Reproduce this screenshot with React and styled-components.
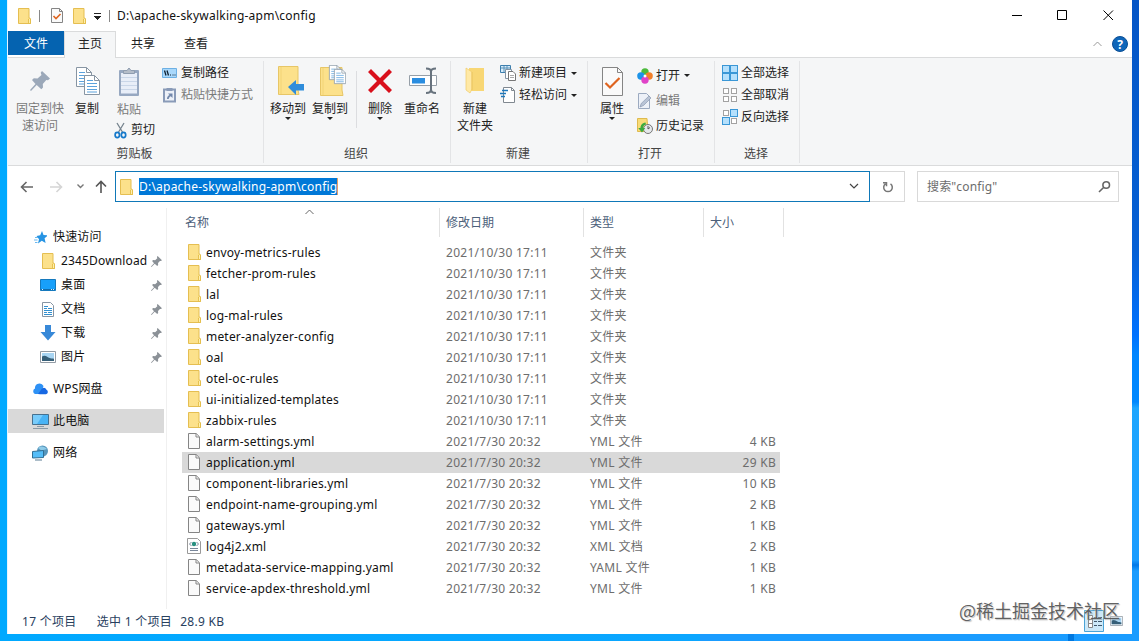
import React, { useState } from 'react'
import styled, { createGlobalStyle } from 'styled-components'

const GlobalStyle = createGlobalStyle`
    * {
        box-sizing: border-box;
    }

    body {
        margin: 0;
        overflow: hidden;
        font-family: "Noto Sans", "Noto Sans CJK SC", sans-serif;
        font-size: 12px;
        line-height: 18px;
        color: #111;
    }

    svg {
        display: block;
        flex: none;
    }
`

const Desktop = styled.div`
    width: 1139px;
    height: 641px;
    padding: 0 7px 7px 7px;
    background:
        linear-gradient(#0078e0, #0078e0) 1068px 634px / 6px 7px no-repeat,
        linear-gradient(#1a9cff, #1a9cff) 700px 634px / 439px 7px no-repeat,
        linear-gradient(#0455c6 0, #0560d4 250px, #0072ff 335px, #0086ff 355px, #0088ff 402px, #1ea6ff 408px, #1a9cff 560px, #0078e8 565px, #1a9cff 571px) 1132px 0 / 7px 641px no-repeat,
        linear-gradient(90deg, #00a9ff, #12a4ff);
`

const Window = styled.div`
    height: 634px;
    display: flex;
    flex-direction: column;
    background: #fff;
    border-left: 1px solid #e6f5ff;
`

const TitleBar = styled.div`
    height: 31px;
    display: flex;
    align-items: center;
    padding-left: 10px;
`

const TitleDivider = styled.div`
    width: 1px;
    height: 12px;
    background: #888;
    margin: 0 ${p => p.$right}px 0 ${p => p.$left}px;
`

const TitleText = styled.div`
    flex: 1;
    letter-spacing: 0.23px;
`

const WindowButtons = styled.div`
    display: flex;
    gap: 35px;
    padding-right: 18px;
`

const Tabs = styled.div`
    height: 27px;
    display: flex;
    border-bottom: 1px solid #dadbdc;
    flex: none;
`

const Tab = styled.div`
    width: ${p => p.$width}px;
    height: ${p => (p.$active ? 27 : 24)}px;
    padding-top: ${p => (p.$active ? 3 : 4)}px;
    text-align: center;
    color: ${p => (p.$file ? '#fff' : '#222')};
    background: ${p => (p.$file ? '#0563b0' : p.$active ? '#f5f6f7' : 'transparent')};
    border: ${p => (p.$active ? '1px solid #dadbdc' : 'none')};
    border-bottom: none;
`

const TabTools = styled.div`
    margin-left: auto;
    display: flex;
    align-items: center;
    gap: 10px;
    padding-right: 4px;
`

const RibbonBar = styled.div`
    height: 108px;
    display: flex;
    flex: none;
    background: #f5f6f7;
    border-bottom: 1px solid #dadbdc;
    padding-top: 3px;
`

const Group = styled.div`
    width: ${p => p.$width}px;
    height: 102px;
    display: flex;
    flex-direction: column;
    border-right: 1px solid #e3e4e6;
`

const GroupBody = styled.div`
    flex: 1;
    display: flex;
    align-items: flex-start;
    padding-left: ${p => p.$left}px;
`

const GroupLabel = styled.div`
    height: 18px;
    padding-right: 2px;
    text-align: center;
    color: #444;
`

const Column = styled.div`
    width: ${p => p.$width || 'auto'};
    padding: ${p => p.$top || 1}px 0 0 ${p => p.$left || 0}px;
`

const BigButton = styled.div`
    width: ${p => p.$width}px;
    display: flex;
    flex-direction: column;
    align-items: center;
    text-align: center;
    line-height: 17px;
    white-space: pre;
    color: ${p => (p.$disabled ? '#7a7a7a' : '#222')};
`

const BigIcon = styled.div`
    height: 39px;
    padding-top: 1px;
    display: flex;
    align-items: center;
`

const SmallButton = styled.div`
    height: ${p => p.$height || 22}px;
    display: flex;
    align-items: center;
    gap: ${p => p.$gap || 3}px;
    white-space: nowrap;
    color: ${p => (p.$disabled ? '#7a7a7a' : '#222')};
`

const Arrow = styled.span`
    width: 0;
    border: 3px solid transparent;
    border-top-color: #222;
    border-bottom: none;
    margin-left: ${p => p.$left || 0}px;
`

const BodyDivider = styled.div`
    width: 1px;
    height: 57px;
    background: #dcdde0;
    margin: 10px 4px 0 5px;
`

const AddressRow = styled.div`
    height: 42px;
    flex: none;
    display: flex;
    align-items: flex-start;
    padding: 5px 13px 0 12px;
`

const NavButtons = styled.div`
    width: 95px;
    height: 31px;
    display: flex;
    align-items: center;
`

const AddressBox = styled.div`
    width: 755px;
    height: 31px;
    display: flex;
    align-items: center;
    padding: 0 10px 0 4px;
    border: 1px solid #0f78b8;
`

const Selected = styled.span`
    background: #0078d7;
    color: #fff;
    height: 17px;
    line-height: 17px;
    margin-left: 6px;
    margin-right: auto;
    border-right: 1px solid #e8a060;
    letter-spacing: 0.22px;
`

const Refresh = styled.div`
    width: 35px;
    height: 31px;
    display: flex;
    align-items: center;
    justify-content: center;
    padding-left: 2px;
    border: 1px solid #d9d9d9;
    border-left: none;
`

const Search = styled.div`
    width: 202px;
    height: 31px;
    margin-left: 12px;
    display: flex;
    align-items: center;
    justify-content: space-between;
    padding: 0 7px 0 9px;
    border: 1px solid #d9d9d9;
    color: #6d6d6d;
    letter-spacing: 0.15px;
`

const Main = styled.div`
    flex: 1;
    display: flex;
    min-height: 0;
`

const Sidebar = styled.div`
    width: 159px;
    padding-top: 17px;
    border-right: 1px solid #f0f0f0;
`

const NavItem = styled.div`
    width: 156px;
    height: 24px;
    display: flex;
    align-items: center;
    padding: 0 2px 0 ${p => (p.$child ? 32 : 24)}px;
    margin-top: ${p => (p.$spaced ? 8 : 0)}px;
    background: ${p => (p.$active ? '#d9d9d9' : 'transparent')};
`

const NavText = styled.span`
    flex: 1;
    margin-left: 5px;
    white-space: nowrap;
    letter-spacing: 0.15px;
`

const Files = styled.div`
    padding-left: 15px;
`

const columns = '258px 144px 120px 80px'

const Header = styled.div`
    height: 34px;
    display: grid;
    grid-template-columns: ${columns};
    color: #4c607a;
`

const HeaderCell = styled.div`
    position: relative;
    height: 29px;
    padding: 6px 0 0 ${p => p.$left || 6}px;
    border-right: 1px solid #e2e2e2;
`

const SortMark = styled.div`
    position: absolute;
    top: 1px;
    left: 123px;
`

const Row = styled.div`
    width: 598px;
    height: 21px;
    display: grid;
    grid-template-columns: 264px 144px 114px 72px;
    align-items: center;
    background: ${p => (p.$selected ? '#d9d9d9' : 'transparent')};
    color: #6d6d6d;
    letter-spacing: 0.27px;
`

const NameCell = styled.div`
    display: flex;
    align-items: center;
    gap: 5px;
    padding-left: 5px;
    color: #111;
    white-space: nowrap;
    letter-spacing: 0.19px;
`

const Size = styled.div`
    text-align: right;
`

const StatusBar = styled.div`
    height: 25px;
    flex: none;
    display: flex;
    position: relative;
    padding: 4px 0 0 14px;
    color: #28405e;
`

const StatusItem = styled.span`
    margin-right: ${p => p.$right}px;
    white-space: pre;
    letter-spacing: 0.3px;
`

const ViewButtons = styled.div`
    display: flex;
    align-items: center;
    gap: 6px;
    margin-left: auto;
    height: 22px;
    margin-right: 9px;
    margin-top: -3px;
`

const Watermark = styled.div`
    position: absolute;
    right: 12px;
    top: -12px;
    font-family: "Noto Sans CJK SC", sans-serif;
    font-size: 18px;
    line-height: 26px;
    color: rgba(70,70,70,0.85);
    text-shadow: 0 0 2px #fff, 1px 1px 1px rgba(0,0,0,0.3);
    white-space: nowrap;
`

function Folder({ w = 13, h = 16 }) {
    return (
        <svg width={w} height={h} viewBox="0 0 13 16" preserveAspectRatio="none">
            <path d="M.5.5H11V10l1.5 1v4.5H.5z" fill="#fce18b" stroke="#e5be51" />
            <path d="M10.5 15.5V11l1.2-1 .8 1v4.5z" fill="#fff0ae" stroke="#dfb73f" strokeWidth=".8" />
        </svg>
    )
}

function Page() {
    return (
        <svg width="12" height="16">
            <path d="M.5.5h7.7l3.3 3.3v11.7H.5z" fill="#fafafa" stroke="#858585" />
            <path d="M8 .8V4h3.400" fill="none" stroke="#858585" />
        </svg>
    )
}

function SmallCheckPage() {
    return (
        <svg width="12" height="15">
            <path d="M.5.5h8l3 3v11H.5z" fill="#fafafa" stroke="#858585" />
            <path d="M8.500.5v3h3" fill="none" stroke="#858585" />
            <path d="M2.500 8l2.500 2.500L9.500 6" fill="none" stroke="#df641f" strokeWidth="1.600" />
        </svg>
    )
}

function BigCheckPage() {
    return (
        <svg width="21" height="29">
            <path d="M.5.5h15l5 5v23H.5z" fill="#fafafa" stroke="#858585" />
            <path d="M15.500.5v5h5" fill="none" stroke="#858585" />
            <path d="M3.500 16l4.500 4.500L17.500 11" fill="none" stroke="#df641f" strokeWidth="2.200" />
        </svg>
    )
}

function XmlFile() {
    return (
        <svg width="14" height="16">
            <path d="M.5.5h10l3 3v12H.5z" fill="#fff" stroke="#999" />
            <path d="M4.5 4L2.5 6l2 2M9.5 4l2 2-2 2M3 10.5h8M3 12.5h8" fill="none" stroke="#79869a" />
            <circle cx="7" cy="6" r="2.2" fill="#289080" />
        </svg>
    )
}

function Pin({ size = 11, color = '#8b9197' }) {
    return (
        <svg width={size} height={size} viewBox="0 0 20 20">
            <path d="M12 0l8 7.500-2 1.800-1.700-.4-3.500 4 .2 3.500-1.700 1.800-4.600-4.300L1 20l-1-1 5.500-6L2 9l1.800-1.800 3.700.3 4-3.600-.8-2.100z" fill={color} />
        </svg>
    )
}

function TextPage({ x, y, s = 1 }) {
    return (
        <g transform={`translate(${x} ${y}) scale(${s})`}>
            <path d="M.5.5h10l5 5v14H.5z" fill="#fff" stroke="#8795a3" />
            <path d="M10.500.5v5h5" fill="none" stroke="#8795a3" />
            <path d="M3 5.500h6M3 8.500h10M3 11.500h10M3 14.500h10M3 17h10" stroke="#5ba2dc" fill="none" />
        </g>
    )
}

function CopyIcon() {
    return (
        <svg width="28" height="30" viewBox="-2 0 28 30">
            <TextPage x={1} y={1} />
            <TextPage x={9} y={9} />
        </svg>
    )
}

function Clipboard() {
    return (
        <svg width="22" height="30" viewBox="-1 0 22 30">
            <rect x="0" y="3" width="20" height="26" rx="1" fill="#97a8c1" />
            <path d="M2 6h16v20.500H2z" fill="#e8eef8" />
            <path d="M2 10.500h16M2 14.500h16M2 18.500h16M2 22.500h16" stroke="#c9d6e8" />
            <path d="M4.500 6.500v-3H8L10 1l2 2.500h3.500v3z" fill="#b4bdc9" stroke="#8f9db0" />
        </svg>
    )
}

function Scissors() {
    return (
        <svg width="13" height="17">
            <path d="M3 1l6 10M10 1L4 11" stroke="#76838e" strokeWidth="1.300" />
            <ellipse cx="3.300" cy="13" rx="2.200" ry="2.600" fill="none" stroke="#1679ca" strokeWidth="1.700" />
            <ellipse cx="9.500" cy="13" rx="2.200" ry="2.600" fill="none" stroke="#1679ca" strokeWidth="1.700" />
        </svg>
    )
}

function PathIcon() {
    return (
        <svg width="15" height="10">
            <path d="M.5.5h14v9H.5z" fill="#a9d8fb" stroke="#6db0e4" />
            <path d="M2.500 2.500l1.500 5M5 2.500l1.500 5" stroke="#123" strokeWidth="1.300" />
            <path d="M8 7h1M10.500 7h1M12.500 7h1" stroke="#123" />
        </svg>
    )
}

function ShortcutIcon() {
    return (
        <svg width="15" height="16" viewBox="-1 0 15 16">
            <path d="M1 2.500h11v12H1z" fill="#edf1f8" stroke="#8a9bb8" strokeWidth="2" />
            <path d="M3.500 1h6v3h-6z" fill="#8a9bb8" />
            <path d="M4 12c0-2 .5-3 2.500-4L5 6.500h4.500V11L7.800 9.300C6.500 10 5.800 11 5.800 12z" fill="#7388ab" />
        </svg>
    )
}

function MoveIcon() {
    return (
        <svg width="32" height="30" viewBox="-4 0 32 30">
            <path d="M2.500.5H22V24l1 4.500H2.500z" fill="#fce18b" stroke="#e7c667" />
            <path d="M5 1v27" stroke="#f2d477" />
            <path d="M12 21l8-7v4h8v6.500h-8V29z" fill="#2f8ddb" />
        </svg>
    )
}

function CopyToIcon() {
    return (
        <svg width="32" height="32" viewBox="-5 0 32 32">
            <path d="M1.500 2.500H23V25l1 5.500H1.500z" fill="#fce18b" stroke="#e7c667" />
            <path d="M4 3v27" stroke="#f2d477" />
            <TextPage x={10} y={0} s={0.75} />
            <TextPage x={15} y={4} s={0.75} />
        </svg>
    )
}

function DeleteIcon() {
    return (
        <svg width="26" height="26">
            <path d="M1 4l3-3 9 9 9-9 3 3-9 9 9 9-3 3-9-9-9 9-3-3 9-9z" fill="#d9101c" />
        </svg>
    )
}

function RenameIcon() {
    return (
        <svg width="30" height="28" viewBox="-2 0 30 28">
            <path d="M.5 8.500h27v10H.5z" fill="#fff" stroke="#969fa8" />
            <path d="M3 11h13v5.500H3z" fill="#2a8de0" />
            <path d="M17 1.500c3 0 5 .5 5 3v18c0 2.500-2 3.500-5 3.500M27 1.500c-3 0-5 .5-5 3v18c0 2.500 2 3.500 5 3.500" fill="none" stroke="#68737e" strokeWidth="2" />
        </svg>
    )
}

function NewFolderIcon() {
    return (
        <svg width="20" height="28">
            <path d="M4 1h15v23H4z" fill="#f8d775" />
            <path d="M1 1l6 4v17l-2 4-4-3z" fill="#ffe9a6" stroke="#efcb69" strokeWidth=".7" />
            <path d="M7 5v18" stroke="#ecc763" />
        </svg>
    )
}

function NewItemIcon() {
    return (
        <svg width="16" height="16">
            <path d="M.5.5h10v7H.5z" fill="#d6ecfb" stroke="#3d7fae" />
            <path d="M1 3h9M4 1v6M7 1v6" stroke="#5a92b8" />
            <path d="M5.500 4.500h6v9h-6z" fill="#fff" stroke="#8495a5" />
            <path d="M8.500 6.500H13l2.500 2.500v6.500h-7z" fill="#fff" stroke="#777" />
            <path d="M10 10.500h4M10 12.500h4" stroke="#aaa" />
        </svg>
    )
}

function EasyAccessIcon() {
    return (
        <svg width="16" height="16">
            <path d="M3.500.5h8l3 3v12h-11z" fill="#fff" stroke="#808890" />
            <path d="M11.500.5v3h3" fill="none" stroke="#808890" />
            <path d="M2 3.500h6M0 6.500h6M1 9.500h4" stroke="#1f79bd" strokeWidth="1.500" />
        </svg>
    )
}

function OpenIcon() {
    return (
        <svg width="16" height="16">
            <circle cx="8" cy="3.900" r="3.700" fill="#4cba3c" />
            <circle cx="12.100" cy="8" r="3.700" fill="#f2802a" />
            <circle cx="3.900" cy="8" r="3.700" fill="#1c93e8" />
            <circle cx="8" cy="12.100" r="3.700" fill="#e043c8" />
            <circle cx="8" cy="8" r="1.500" fill="#fff" />
        </svg>
    )
}

function EditIcon() {
    return (
        <svg width="15" height="16">
            <path d="M1.500.5h8l3 3v12h-11z" fill="#edf1f8" stroke="#9caac0" />
            <path d="M3 14l1.200-3.500L12 3l2 2-7.500 7.500z" fill="#b9c4d6" stroke="#8291aa" strokeWidth=".6" />
        </svg>
    )
}

function HistoryIcon() {
    return (
        <svg width="16" height="16">
            <path d="M.5.5H10l1 13H.5z" fill="#f8dc78" stroke="#dfba4e" />
            <circle cx="11" cy="11" r="4.500" fill="#e5e8eb" stroke="#777" />
            <path d="M11 8v3l2-1.500" fill="none" stroke="#555" />
            <path d="M8.500 4.500C5 5 3.500 7.500 3.500 10H1.200L5 14.500 8.200 10H6.200c0-2 .8-3 2.800-3.500z" fill="#3bab3f" />
        </svg>
    )
}

// filled: which of the four squares are highlighted
function SelectIcon({ filled }) {
    const cells = [[0, 0], [8, 0], [0, 8], [8, 8]]
    return (
        <svg width="16" height="16">
            {cells.map(([x, y], i) =>
                filled.includes(i)
                    ? <rect key={i} x={x + 0.5} y={y + 0.5} width="7" height="7" fill="#b5e0fc" stroke="#3a97d6" />
                    : <rect key={i} x={x + 1.5} y={y + 1.5} width="5" height="5" fill="#fff" stroke="#a2a2a2" />
            )}
        </svg>
    )
}

function Star() {
    return (
        <svg width="14" height="13" viewBox="-1 0 14 13">
            <path d="M8 0l1.500 4 4.500.3-3.400 3 1 4.700-3.800-2.300L4 12.500l1-4.300L2.500 5l3.700-.8z" fill="#2794e3" />
            <path d="M1 6.500h3M0 9h3.500M1 11.500h2.500" stroke="#6bb8ef" />
        </svg>
    )
}

function DesktopIcon() {
    return (
        <svg width="16" height="12">
            <path d="M.5.5h15v11H.5z" fill="#18a0fa" stroke="#1579bd" />
            <path d="M1 10.500h14" stroke="#126dac" />
            <path d="M2 10.500h1M11 10.500h1M13 10.500h1" stroke="#d7f0ff" />
        </svg>
    )
}

function DocIcon() {
    return (
        <svg width="12" height="15">
            <path d="M.5.5h8l3 3v11H.5z" fill="#fff" stroke="#8795a3" />
            <path d="M2 4.500h4M2 6.500h3M6 6.500h4M2 8.500h8M2 10.500h3M6 10.500h4M2 12.500h8" stroke="#3390d0" />
        </svg>
    )
}

function DownloadIcon() {
    return (
        <svg width="16" height="16">
            <path d="M5 0h6v7h4.500L8 15.500.5 7H5z" fill="#3889d8" />
        </svg>
    )
}

function PictureIcon({ w = 16, h = 12 }) {
    return (
        <svg width={w} height={h} viewBox="0 0 16 12">
            <path d="M.5.5h15v11H.5z" fill="#fff" stroke="#929ba4" />
            <path d="M2 2h12v8H2z" fill="#a8d5f3" />
            <path d="M2 5.500c3-2 5 0 7 1.200 2 1 3 .5 5 1V10H2z" fill="#365f78" />
        </svg>
    )
}

function CloudIcon() {
    return (
        <svg width="17" height="12">
            <path d="M3 11a3 3 0 0 1 0-5.500A4.500 4.500 0 0 1 11.500 3L9 11z" fill="#2e91f5" />
            <path d="M6 11l4-5.500a3.200 3.200 0 0 1 4.500 1.300 2.400 2.400 0 0 1-.5 4.500H8z" fill="#1768e3" />
        </svg>
    )
}

function PcIcon() {
    return (
        <svg width="17" height="15">
            <path d="M.5.5h16v10H.5z" fill="#4ab4f5" stroke="#47718f" />
            <path d="M1 1h10L5 10H1z" fill="#78ccfb" />
            <path d="M5 12.500h7M1 14.500h15" stroke="#8b9ba7" />
        </svg>
    )
}

function NetworkIcon() {
    return (
        <svg width="17" height="16">
            <circle cx="10.500" cy="6" r="5.500" fill="#5695bb" />
            <path d="M6 3c3-3 7-1 9 1-2 1-3 0-5 2z" fill="#8fcbe8" />
            <path d="M.5 6.500l11-1v7l-11 .5z" fill="#54bdf8" stroke="#306f95" />
            <path d="M3 15h7" stroke="#5b7d93" />
        </svg>
    )
}

function DetailsView() {
    return (
        <svg width="20" height="22">
            <path d="M.5.5h19v21H.5z" fill="#cce8f8" stroke="#4aa3d6" />
            <path d="M4.500 5.500h4v12h-4z" fill="#fff" stroke="#888" />
            <path d="M4.500 9.500h4M4.500 13.500h4" stroke="#888" />
            <path d="M10 7.500h3M14 7.500h4M10 11.500h3M14 11.500h4M10 15.500h3M14 15.500h4" stroke="#40566a" />
        </svg>
    )
}

function Stroke({ w, h, d, color = '#222', width = 1 }) {
    return (
        <svg width={w} height={h}>
            <path d={d} fill="none" stroke={color} strokeWidth={width} />
        </svg>
    )
}

const navIcons = {
    star: Star,
    folder: Folder,
    desktop: DesktopIcon,
    doc: DocIcon,
    download: DownloadIcon,
    picture: PictureIcon,
    cloud: CloudIcon,
    pc: PcIcon,
    network: NetworkIcon
}

const navItems = [
    { text: '快速访问', icon: 'star' },
    { text: '2345Download', icon: 'folder', child: true },
    { text: '桌面', icon: 'desktop', child: true },
    { text: '文档', icon: 'doc', child: true },
    { text: '下载', icon: 'download', child: true },
    { text: '图片', icon: 'picture', child: true },
    { text: 'WPS网盘', icon: 'cloud', spaced: true },
    { text: '此电脑', icon: 'pc', spaced: true, active: true },
    { text: '网络', icon: 'network', spaced: true }
]

const NavIconBox = styled.div`
    width: 16px;
    display: flex;
    justify-content: center;
`

const folders = [
    'envoy-metrics-rules',
    'fetcher-prom-rules',
    'lal',
    'log-mal-rules',
    'meter-analyzer-config',
    'oal',
    'otel-oc-rules',
    'ui-initialized-templates',
    'zabbix-rules'
]

const files = [
    ...folders.map(name => ({ name, date: '2021/10/30 17:11', type: '文件夹', size: '' })),
    { name: 'alarm-settings.yml', type: 'YML 文件', size: '4 KB' },
    { name: 'application.yml', type: 'YML 文件', size: '29 KB' },
    { name: 'component-libraries.yml', type: 'YML 文件', size: '10 KB' },
    { name: 'endpoint-name-grouping.yml', type: 'YML 文件', size: '2 KB' },
    { name: 'gateways.yml', type: 'YML 文件', size: '1 KB' },
    { name: 'log4j2.xml', type: 'XML 文档', size: '2 KB' },
    { name: 'metadata-service-mapping.yaml', type: 'YAML 文件', size: '1 KB' },
    { name: 'service-apdex-threshold.yml', type: 'YML 文件', size: '1 KB' }
]

const IconBox = styled.div`
    width: 14px;
    display: flex;
    justify-content: center;
    padding-bottom: 1px;
`

const Gap = styled.div`
    width: ${p => p.$width}px;
`

function FileIcon({ file }) {
    if (!file.size) {
        return <Folder />
    }
    return file.name.endsWith('.xml') ? <XmlFile /> : <Page />
}

function Big({ width, icon, label, arrow, disabled }) {
    return (
        <BigButton $width={width} $disabled={disabled}>
            <BigIcon>{icon}</BigIcon>
            <span>{label}</span>
            {arrow && <Arrow />}
        </BigButton>
    )
}

function Small({ icon, label, arrow, disabled, height, gap }) {
    return (
        <SmallButton $height={height} $gap={gap} $disabled={disabled}>
            {icon}
            <span>{label}</span>
            {arrow && <Arrow $left={1} />}
        </SmallButton>
    )
}

function Ribbon() {
    return (
        <RibbonBar>
            <Group $width={256}>
                <GroupBody $left={8}>
                    <Big width={48} icon={<Pin size={20} color="#9ba8b9" />} label={'固定到快\n速访问'} disabled />
                    <Big width={46} icon={<CopyIcon />} label="复制" />
                    <Column $width="52px">
                        <Big width={38} icon={<Clipboard />} label="粘贴" disabled />
                        <Column $left={4}>
                            <Small icon={<Scissors />} label="剪切" gap={4} />
                        </Column>
                    </Column>
                    <Column>
                        <Small icon={<PathIcon />} label="复制路径" gap={4} />
                        <Small icon={<ShortcutIcon />} label="粘贴快捷方式" gap={4} disabled />
                    </Column>
                </GroupBody>
                <GroupLabel>剪贴板</GroupLabel>
            </Group>
            <Group $width={187}>
                <GroupBody $left={3}>
                    <Big width={42} icon={<MoveIcon />} label="移动到" arrow />
                    <Big width={42} icon={<CopyToIcon />} label="复制到" arrow />
                    <BodyDivider />
                    <Big width={38} icon={<DeleteIcon />} label="删除" arrow />
                    <Gap $width={2} />
                    <Big width={42} icon={<RenameIcon />} label="重命名" />
                </GroupBody>
                <GroupLabel>组织</GroupLabel>
            </Group>
            <Group $width={137}>
                <GroupBody $left={2}>
                    <Big width={44} icon={<NewFolderIcon />} label={'新建\n文件夹'} />
                    <Column $left={3}>
                        <Small icon={<NewItemIcon />} label="新建项目" arrow />
                        <Small icon={<EasyAccessIcon />} label="轻松访问" arrow />
                    </Column>
                </GroupBody>
                <GroupLabel>新建</GroupLabel>
            </Group>
            <Group $width={127}>
                <GroupBody $left={4}>
                    <Big width={40} icon={<BigCheckPage />} label="属性" arrow />
                    <Column $left={5} $top={2}>
                        <Small icon={<OpenIcon />} label="打开" height={25} arrow />
                        <Small icon={<EditIcon />} label="编辑" height={25} gap={4} disabled />
                        <Small icon={<HistoryIcon />} label="历史记录" height={25} />
                    </Column>
                </GroupBody>
                <GroupLabel>打开</GroupLabel>
            </Group>
            <Group $width={85}>
                <GroupBody $left={7}>
                    <Column>
                        <Small icon={<SelectIcon filled={[0, 1, 2, 3]} />} label="全部选择" />
                        <Small icon={<SelectIcon filled={[]} />} label="全部取消" />
                        <Small icon={<SelectIcon filled={[1, 2]} />} label="反向选择" />
                    </Column>
                </GroupBody>
                <GroupLabel>选择</GroupLabel>
            </Group>
        </RibbonBar>
    )
}

function HelpIcon() {
    return (
        <svg width="16" height="16">
            <circle cx="8" cy="8" r="7.500" fill="#0f66b9" stroke="#0b4e94" />
            <text x="8" y="12.500" textAnchor="middle" fontSize="12" fontWeight="700" fill="#fff">?</text>
        </svg>
    )
}

export default function App() {

    const [selected, setSelected] = useState('application.yml')

    return (
        <Desktop>
            <GlobalStyle />
            <Window>
                <TitleBar>
                    <Folder />
                    <TitleDivider $left={8} $right={11} />
                    <SmallCheckPage />
                    <Gap $width={10} />
                    <Folder />
                    <Gap $width={8} />
                    <Stroke w={7} h={8} d="M0 1.5h7M0 4.5h7M1 5.5h5M2 6.5h3M3 7.5h1" />
                    <TitleDivider $left={8} $right={7} />
                    <TitleText>D:\apache-skywalking-apm\config</TitleText>
                    <WindowButtons>
                        <Stroke w={11} h={11} d="M1 5.5h10" color="#000" />
                        <Stroke w={11} h={11} d="M.5.5h9v9h-9z" color="#000" />
                        <Stroke w={11} h={11} d="M.5.5l9.5 9.500M10 .5L.5 10" color="#000" />
                    </WindowButtons>
                </TitleBar>
                <Tabs>
                    <Tab $width={56} $file>文件</Tab>
                    <Tab $width={52} $active>主页</Tab>
                    <Tab $width={54}>共享</Tab>
                    <Tab $width={52}>查看</Tab>
                    <TabTools>
                        <Stroke w={9} h={6} d="M.5 5l4-4 4 4" color="#999" />
                        <HelpIcon />
                    </TabTools>
                </Tabs>
                <Ribbon />
                <AddressRow>
                    <NavButtons>
                        <Stroke w={14} h={12} d="M13 6H1.500M6.500 1L1.500 6l5 5" color="#666" width={1.6} />
                        <Gap $width={16} />
                        <Stroke w={14} h={12} d="M0 6h11.500M6.500 1l5 5-5 5" color="#d5d5d5" width={1.6} />
                        <Gap $width={13} />
                        <Stroke w={7} h={5} d="M.5.500l3 3 3-3" color="#777" width={1.4} />
                        <Gap $width={11} />
                        <Stroke w={12} h={13} d="M6 13V1.500M1 6.500l5-5 5 5" color="#555" width={1.6} />
                    </NavButtons>
                    <AddressBox>
                        <Folder />
                        <Selected>D:\apache-skywalking-apm\config</Selected>
                        <Stroke w={10} h={7} d="M1 1l4 4 4-4" color="#444" width={1.2} />
                    </AddressBox>
                    <Refresh>
                        <Stroke w={12} h={12} d="M3.5 2.800A4.300 4.300 0 1 0 8.500 2.800M1 1.800h3.500v3.500" color="#777" width={1.500} />
                    </Refresh>
                    <Search>
                        <span>搜索"config"</span>
                        <Stroke w={13} h={13} d="M11.500 5A3.300 3.300 0 1 1 4.900 5 3.300 3.300 0 0 1 11.500 5M5.800 7.300L1 12" color="#666" width={1.600} />
                    </Search>
                </AddressRow>
                <Main>
                    <Sidebar>
                        {navItems.map(item => {
                            const Icon = navIcons[item.icon]
                            return (
                                <NavItem key={item.text} $child={item.child} $spaced={item.spaced} $active={item.active}>
                                    <NavIconBox><Icon /></NavIconBox>
                                    <NavText>{item.text}</NavText>
                                    {item.child && <Pin />}
                                </NavItem>
                            )
                        })}
                    </Sidebar>
                    <Files>
                        <Header>
                            <HeaderCell $left={3}>
                                名称
                                <SortMark><Stroke w={9} h={6} d="M.5 5l4-4 4 4" color="#666" /></SortMark>
                            </HeaderCell>
                            <HeaderCell>修改日期</HeaderCell>
                            <HeaderCell>类型</HeaderCell>
                            <HeaderCell>大小</HeaderCell>
                        </Header>
                        {files.map(file =>
                            <Row
                                key={file.name}
                                $selected={file.name === selected}
                                onClick={() => setSelected(file.name)}
                            >
                                <NameCell>
                                    <IconBox><FileIcon file={file} /></IconBox>
                                    <span>{file.name}</span>
                                </NameCell>
                                <span>{file.date || '2021/7/30 20:32'}</span>
                                <span>{file.type}</span>
                                <Size>{file.size}</Size>
                            </Row>
                        )}
                    </Files>
                </Main>
                <StatusBar>
                    <StatusItem $right={20}>17 个项目</StatusItem>
                    <StatusItem $right={8}>选中 1 个项目</StatusItem>
                    <StatusItem $right={0}>28.9 KB</StatusItem>
                    <ViewButtons>
                        <DetailsView />
                        <PictureIcon w={13} h={10} />
                    </ViewButtons>
                    <Watermark>@稀土掘金技术社区</Watermark>
                </StatusBar>
            </Window>
        </Desktop>
    )
}
